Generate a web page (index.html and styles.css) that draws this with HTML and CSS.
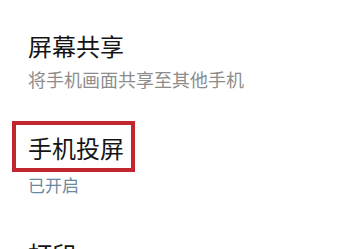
FILE: index.html
```html
<!DOCTYPE html>
<html lang="zh-CN">
<head>
<meta charset="utf-8">
<link rel="stylesheet" href="styles.css">
</head>
<body>
<div class="list">
  <div class="item first">
    <div class="title">屏幕共享</div>
    <div class="sub">将手机画面共享至其他手机</div>
  </div>
  <div class="item second">
    <div class="highlight">
      <div class="title">手机投屏</div>
    </div>
    <div class="status">已开启</div>
  </div>
  <div class="item third">
    <div class="title">打印</div>
  </div>
</div>
</body>
</html>
```

FILE: styles.css
```css
html, body {
  margin: 0;
  padding: 0;
  background: #ffffff;
}
body {
  width: 360px;
  height: 249px;
  overflow: hidden;
  font-family: "Noto Sans CJK SC", "Noto Sans", sans-serif;
}
.list {
  display: flex;
  flex-direction: column;
}
.item {
  padding-left: 28px;
}
.title {
  font-size: 24px;
  line-height: 24px;
  color: #141414;
}
.sub {
  font-size: 18px;
  line-height: 18px;
  color: #8c8c8c;
  margin-top: 12px;
}
.first {
  padding-top: 34px;
}
.second {
  padding-left: 12px;
  margin-top: 33px;
}
.highlight {
  width: 123px;
  box-sizing: border-box;
  border: 4px solid #c1272d;
  padding: 11px 0 8px 12px;
}
.status {
  font-size: 17px;
  line-height: 17px;
  color: #6a8aa0;
  padding-left: 16px;
  margin-top: 4px;
}
.third {
  margin-top: 49px;
}
```
